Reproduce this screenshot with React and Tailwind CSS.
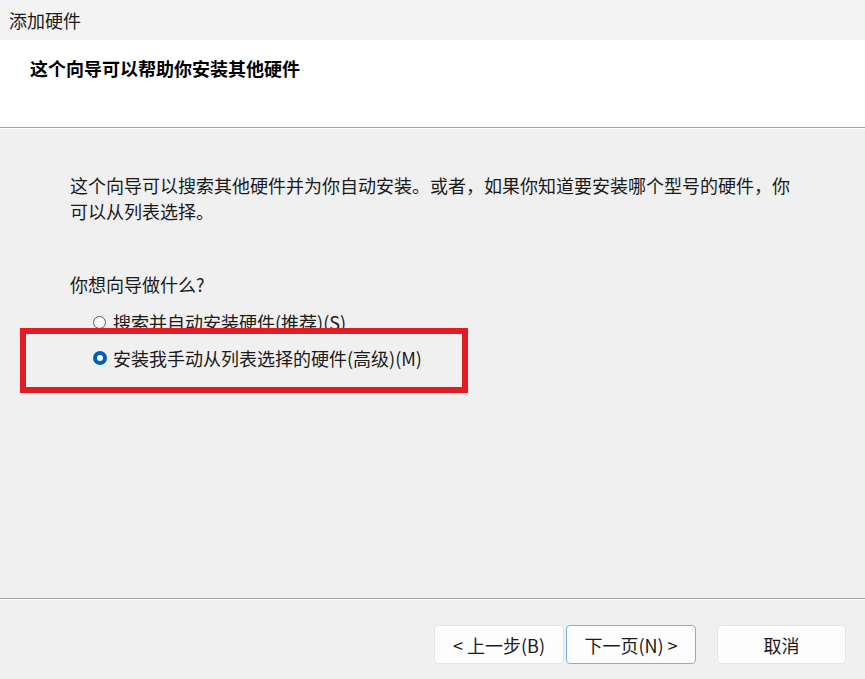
import React from "react";

const font = { fontFamily: '"Noto Sans CJK SC", "Microsoft YaHei", sans-serif' };

function Radio({ checked }) {
  return checked ? (
    <span className="w-[14px] h-[14px] rounded-full bg-[#005fb8] flex items-center justify-center shrink-0">
      <span className="w-[6px] h-[6px] rounded-full bg-white" />
    </span>
  ) : (
    <span className="w-[13px] h-[13px] rounded-full border border-[#5a5a5a] bg-[#f7f7f7] shrink-0" />
  );
}

export default function App() {
  return (
    <div
      className="w-[865px] h-[679px] flex flex-col bg-[#f0f0f0] text-[#1a1a1a] text-[18px] relative overflow-hidden"
      style={font}
    >
      <div className="h-[40px] bg-[#f3f3f3] flex items-center pl-[9px] leading-[26px]">添加硬件</div>
      <div className="h-[87px] bg-white pl-[30px] pt-[15px]">
        <div className="font-bold leading-[26px] text-black">这个向导可以帮助你安装其他硬件</div>
      </div>
      <div className="h-[1px] bg-[#a0a0a0]" />
      <div className="h-[1px] bg-white" />
      <div className="flex-1 flex flex-col pl-[70px] pt-[43px]">
        <p className="leading-[26px]">
          这个向导可以搜索其他硬件并为你自动安装。或者，如果你知道要安装哪个型号的硬件，你
          <br />
          可以从列表选择。
        </p>
        <p className="leading-[26px] mt-[47px]">你想向导做什么?</p>
        <div className="mt-[12px] ml-[23px] flex flex-col gap-[10px]">
          <label className="flex items-center gap-[7px] leading-[26px]">
            <Radio />
            <span>搜索并自动安装硬件(推荐)(S)</span>
          </label>
          <label className="flex items-center gap-[6px] leading-[26px]">
            <Radio checked />
            <span>安装我手动从列表选择的硬件(高级)(M)</span>
          </label>
        </div>
      </div>
      <div className="h-[1px] bg-[#a0a0a0]" />
      <div className="h-[1px] bg-white" />
      <div className="h-[79px] flex items-start justify-end pr-[19px] pt-[25px]">
        <button className="w-[130px] h-[39px] bg-[#fdfdfd] border border-[#e5e5e5] rounded-[4px] leading-[26px] text-[18px]">
          &lt; 上一步(B)
        </button>
        <button className="ml-[2px] w-[130px] h-[39px] bg-[#fdfdfd] border border-[#7eb0e0] rounded-[4px] leading-[26px] text-[18px]">
          下一页(N) &gt;
        </button>
        <button className="ml-[21px] w-[129px] h-[39px] bg-[#fdfdfd] border border-[#e5e5e5] rounded-[4px] leading-[26px] text-[18px]">
          取消
        </button>
      </div>
      <div className="absolute left-[20px] top-[328px] w-[448px] h-[65px] border-[6px] border-[#e31c23]" />
    </div>
  );
}
